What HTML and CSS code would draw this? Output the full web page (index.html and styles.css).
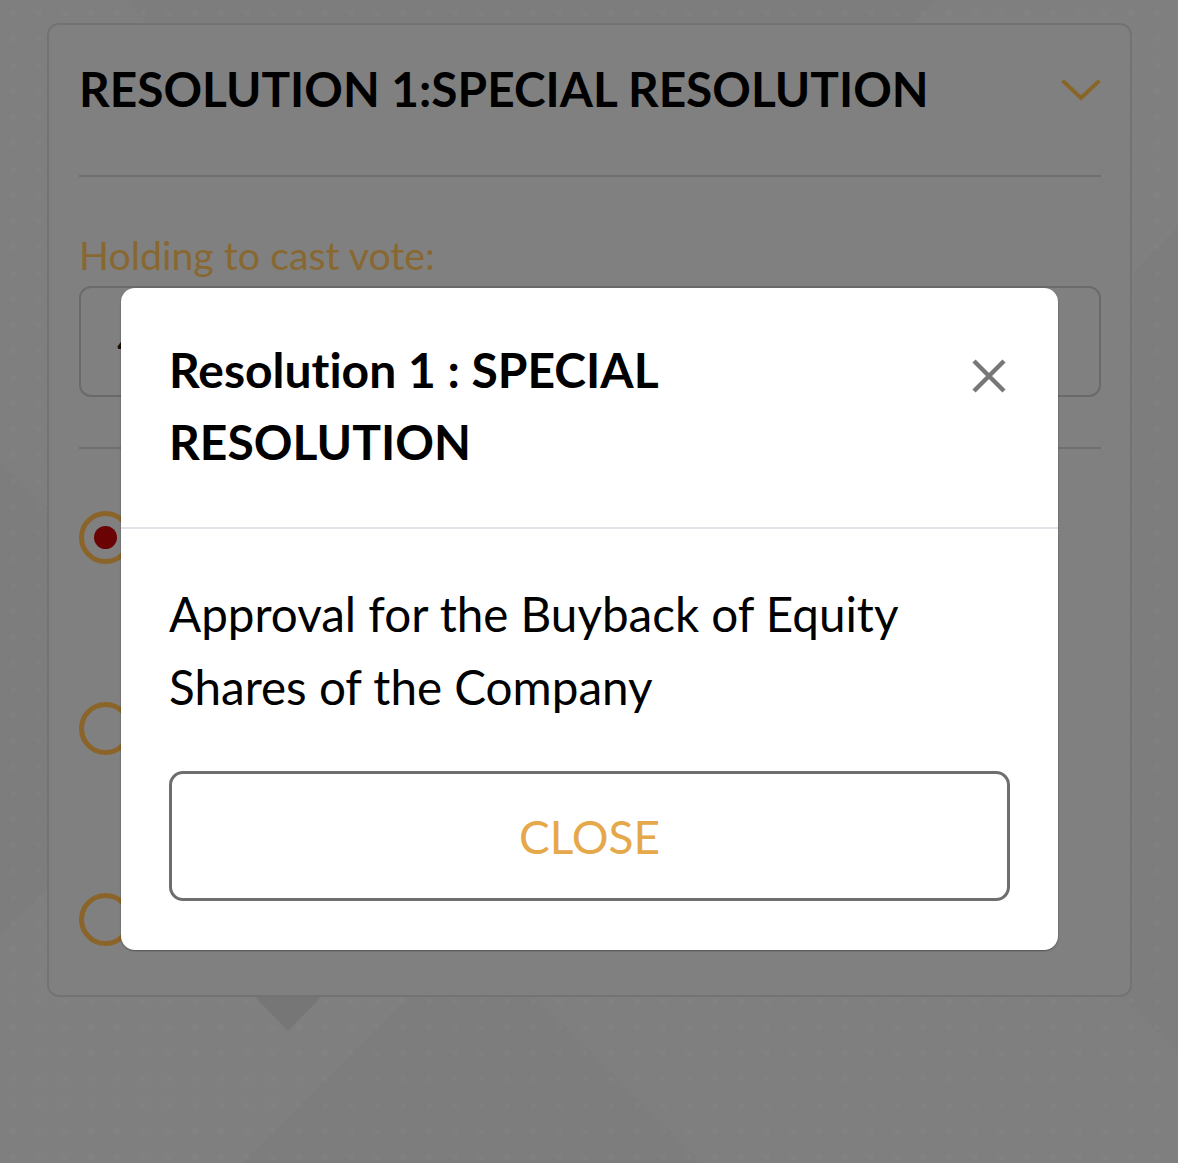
FILE: index.html
```html
<!DOCTYPE html>
<html lang="en">
<head>
<meta charset="utf-8">
<title>Resolution vote</title>
<link rel="stylesheet" href="styles.css">
</head>
<body>
<main class="page">
  <section class="card">
    <header class="card-head">
      <h1 class="card-title">RESOLUTION 1:SPECIAL RESOLUTION</h1>
      <svg class="chevron" width="40" height="24" viewBox="0 0 40 24" aria-hidden="true">
        <polyline points="3,3 20,19 37,3" fill="none" stroke="#8a6528" stroke-width="4" stroke-linecap="square"/>
      </svg>
    </header>
    <div class="holding">
      <label class="holding-label">Holding to cast vote:</label>
      <div class="holding-input">4</div>
    </div>
    <ul class="options">
      <li class="option"><span class="radio checked"></span></li>
      <li class="option"><span class="radio"></span></li>
      <li class="option"><span class="radio"></span></li>
    </ul>
  </section>
</main>

<div class="modal" role="dialog" aria-modal="true">
  <div class="modal-head">
    <h2 class="modal-title">Resolution 1 : SPECIAL RESOLUTION</h2>
    <svg class="close-x" width="36" height="36" viewBox="0 0 36 36" aria-hidden="true">
      <path d="M3 3 L33 33 M33 3 L3 33" stroke="#777777" stroke-width="4.5" fill="none"/>
    </svg>
  </div>
  <div class="modal-body">
    <p class="modal-text">Approval for the Buyback of Equity Shares of the Company</p>
    <button class="close-btn" type="button">CLOSE</button>
  </div>
</div>
</body>
</html>
```

FILE: styles.css
```css
* { box-sizing: border-box; }

html, body {
  margin: 0;
  padding: 0;
}

body {
  width: 1178px;
  height: 1163px;
  overflow: hidden;
  font-family: Lato, "Open Sans", sans-serif;
  font-variant-ligatures: none;
  font-feature-settings: "liga" 0;
  background-color: #7d7d7d;
  background-image:
    linear-gradient(135deg, rgba(255,255,255,0) 0 40%, rgba(255,255,255,0.02) 40% 60%, rgba(255,255,255,0) 60%),
    linear-gradient(45deg, rgba(0,0,0,0) 0 30%, rgba(255,255,255,0.015) 30% 55%, rgba(0,0,0,0) 55%),
    radial-gradient(circle, rgba(255,255,255,0.025) 2px, transparent 3px);
  background-size: 100% 100%, 100% 100%, 26px 26px;
  position: relative;
}

.page {
  padding: 23px 46px 0 47px;
}

.card {
  position: relative;
  width: 1085px;
  height: 974px;
  background: #808080;
  border: 2px solid #737373;
  border-radius: 12px;
  padding: 0 29px 0 30px;
}

.card::after {
  content: "";
  position: absolute;
  left: 206px;
  bottom: -36px;
  border-left: 33px solid transparent;
  border-right: 33px solid transparent;
  border-top: 34px solid #767676;
}

.card-head {
  display: flex;
  align-items: flex-start;
  justify-content: space-between;
  padding: 34px 0 56px;
  border-bottom: 2px solid #6f6f6f;
}

.card-title {
  margin: 0;
  font-size: 47.8px;
  line-height: 60px;
  font-weight: 700;
  color: #000;
}

.chevron {
  margin-top: 20px;
}

.holding {
  padding: 55px 0 50px;
  border-bottom: 2px solid #6f6f6f;
}

.holding-label {
  display: block;
  font-size: 39.3px;
  line-height: 46px;
  color: #886830;
  margin-bottom: 8px;
}

.holding-input {
  height: 111px;
  border: 2px solid #6a6a6a;
  border-radius: 12px;
  padding: 0 36px;
  display: flex;
  align-items: center;
  font-size: 40px;
  color: #111;
}

.options {
  list-style: none;
  margin: 0;
  padding: 62px 0 0;
  display: flex;
  flex-direction: column;
  gap: 138px;
}

.option {
  display: flex;
  align-items: center;
  height: 53px;
}

.radio {
  width: 53px;
  height: 53px;
  border-radius: 50%;
  border: 5px solid #8a6428;
  display: flex;
  align-items: center;
  justify-content: center;
  flex: none;
}

.radio.checked::after {
  content: "";
  width: 23px;
  height: 23px;
  border-radius: 50%;
  background: #6a0303;
}

.modal {
  position: absolute;
  left: 121px;
  top: 288px;
  width: 937px;
  background: #fff;
  border-radius: 14px;
  box-shadow: 0 1px 2px rgba(0,0,0,0.35);
}

.modal-head {
  display: flex;
  justify-content: space-between;
  align-items: flex-start;
  padding: 46px 51px 49px 48px;
  border-bottom: 2px solid #e2e2e8;
}

.modal-title {
  margin: 0;
  width: 560px;
  font-size: 48px;
  line-height: 72px;
  font-weight: 700;
  color: #000;
}

.close-x {
  margin-top: 24px;
}

.modal-body {
  padding: 48px 48px 49px;
}

.modal-text {
  margin: 0 0 48px;
  font-size: 47.6px;
  line-height: 73px;
  color: #000;
}

.close-btn {
  display: block;
  width: 100%;
  height: 130px;
  margin: 0;
  padding: 0;
  background: #fff;
  border: 3px solid #6e6e6e;
  border-radius: 14px;
  font-family: Lato, "Open Sans", sans-serif;
  font-size: 46px;
  color: #e5a84a;
  cursor: pointer;
}
```
